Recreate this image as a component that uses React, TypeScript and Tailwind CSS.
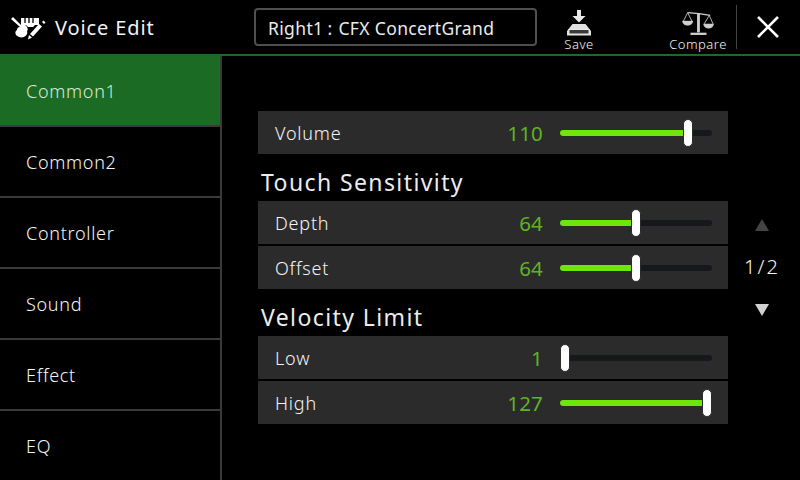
const tabs = ["Common1", "Common2", "Controller", "Sound", "Effect", "EQ"];

function Slider({ value }: { value: number }) {
  const center = 5 + ((value - 1) / 126) * 142;
  return (
    <div className="relative ml-[17px] h-[6px] w-[152px] rounded-full bg-[#17181c]">
      {value > 1 && (
        <div className="absolute left-0 top-0 h-[6px] rounded-l-full bg-[#6ee60a]" style={{ width: center }} />
      )}
      <div
        className="absolute top-[-11px] h-[28px] w-[10px] rounded-full border border-[#2b2b2b] bg-white"
        style={{ left: center - 5 }}
      />
    </div>
  );
}

function Row({ label, value, className = "" }: { label: string; value: number; className?: string }) {
  return (
    <div className={`flex h-[43px] w-[470px] items-center bg-[#2b2b2b] pl-[17px] ${className}`}>
      <span className="flex-1 pt-[1px] text-[18px] font-light tracking-[0.8px] text-[#f4f4f4]">{label}</span>
      <span className="w-[100px] pt-[1px] text-right text-[20.5px] font-normal tracking-[0.2px] text-[#5fb421]">{value}</span>
      <Slider value={value} />
      <div className="w-[16px]" />
    </div>
  );
}

function Heading({ children }: { children: string }) {
  return (
    <div className="flex h-[47px] items-end pb-[4px] pl-[3px] text-[23px] font-normal leading-[30px] tracking-[1.4px] text-[#ececec]">
      {children}
    </div>
  );
}

function VoiceIcon() {
  return (
    <svg width="36" height="26" viewBox="0 0 36 26" className="ml-[10px] mr-[9px] mt-[1px]" fill="white">
      <path d="M1 4l2-2 8 8c3-1 5 0 6 2 1 2 1 3 0 4 1 3-1 5-3 6-3 1-6 0-8-2-1-2-1-4 1-5 0-2 1-3 3-3z" />
      <path d="M11 3h18v7h-4l-2 2h-5l-2-2h-5z" />
      <path d="M15 3v5M19 3v5M23 3v5" stroke="black" strokeWidth="1.3" />
      <path d="M29 9l3 2.5-9 10-3-2.5z" />
      <path d="M19 20l3 2.5-4 2z" />
      <path d="M32 7l1.5-1.5 2 2L34 9z" />
    </svg>
  );
}

function SaveIcon() {
  return (
    <svg width="26" height="26" viewBox="0 0 26 26" fill="none">
      <path d="M11 0h4v6h4.5L13 12.5 6.500 6H11z" fill="#e8e8e8" />
      <path d="M6.500 14h13L25 21v4.500H1V21z" fill="#e0e0e0" />
      <rect x="3" y="19.500" width="20" height="4.500" fill="#3a3a3a" stroke="#e8e8e8" strokeWidth="1" />
    </svg>
  );
}

function CompareIcon() {
  return (
    <svg width="32" height="26" viewBox="0 0 34 26" fill="none" stroke="#cfcfcf">
      <path d="M6 2l12 1 12 2" strokeWidth="1.3" />
      <path d="M1.500 11L6 2l4.500 9M23.500 14L29 5l4 9" strokeWidth="0.9" />
      <path d="M0.500 11h11c0 6-11 6-11 0zM23 14h10.500c0 6-10.500 6-10.500 0z" fill="#cfcfcf" strokeWidth="0.5" />
      <path d="M17.500 2.500V23" strokeWidth="3" />
      <path d="M9 24.500h17" strokeWidth="2.400" />
    </svg>
  );
}

export default function App() {
  return (
    <div className="flex h-[480px] w-[800px] flex-col overflow-hidden bg-black font-['Noto_Sans',sans-serif]">
      <header className="flex h-[56px] shrink-0 items-center border-b-2 border-[#1c6b25]">
        <div className="flex w-[243px] items-center">
          <VoiceIcon />
          <span className="pt-[1px] text-[20px] font-normal tracking-[0.9px] text-[#f2f2f2]">Voice Edit</span>
        </div>
        <div className="ml-[11px] flex h-[38px] w-[283px] items-center rounded-[4px] border-2 border-[#4f4f4f] pl-[12px] pt-[2px] text-[17.5px] font-normal tracking-[0.35px] text-[#ebebeb]">
          Right1<span className="ml-[4px] mr-[6px]">:</span>CFX ConcertGrand
        </div>
        <div className="ml-[14px] flex h-[54px] w-[56px] flex-col items-center justify-end pb-[2px]">
          <SaveIcon />
          <span className="text-[13px] font-light leading-[16px] tracking-[0.5px] text-[#f4f4f4]">Save</span>
        </div>
        <div className="ml-[61px] flex h-[54px] w-[60px] flex-col items-center justify-end pb-[2px]">
          <CompareIcon />
          <span className="text-[13px] font-light leading-[16px] tracking-[0.5px] text-[#f4f4f4]">Compare</span>
        </div>
        <div className="ml-[8px] h-[44px] w-px bg-[#444]" />
        <svg width="22" height="22" viewBox="0 0 22 22" className="ml-[20px]" stroke="white" strokeWidth="2.6">
          <path d="M1 1l20 20M21 1L1 21" />
        </svg>
      </header>
      <div className="flex min-h-0 flex-1">
        <nav className="flex w-[222px] shrink-0 flex-col border-r-2 border-[#3a3a3a]">
          {tabs.map((tab, i) => (
            <div
              key={tab}
              className={`flex items-center pl-[26px] pt-[2px] text-[18px] font-light tracking-[0.7px] ${
                i === 5 ? "h-[69px]" : "h-[71px] border-b-2 border-[#3a3a3a]"
              } ${i === 0 ? "bg-[#1c6b25] text-[#d5ead5]" : "text-[#f4f4f4]"}`}
            >
              {tab}
            </div>
          ))}
        </nav>
        <main className="flex flex-col pl-[36px] pt-[55px]">
          <Row label="Volume" value={110} />
          <Heading>Touch Sensitivity</Heading>
          <Row label="Depth" value={64} />
          <Row label="Offset" value={64} className="mt-[2px]" />
          <Heading>Velocity Limit</Heading>
          <Row label="Low" value={1} />
          <Row label="High" value={127} className="mt-[2px]" />
        </main>
        <aside className="flex flex-1 flex-col items-center pr-[4px] pt-[163px]">
          <div className="h-0 w-0 border-x-[7px] border-b-[12px] border-x-transparent border-b-[#444]" />
          <div className="mt-[24px] text-[20px] font-light leading-[24px] tracking-[2px] text-[#f4f4f4]">1/2</div>
          <div className="mt-[25px] h-0 w-0 border-x-[7px] border-t-[12px] border-x-transparent border-t-[#d0d0d0]" />
        </aside>
      </div>
    </div>
  );
}
